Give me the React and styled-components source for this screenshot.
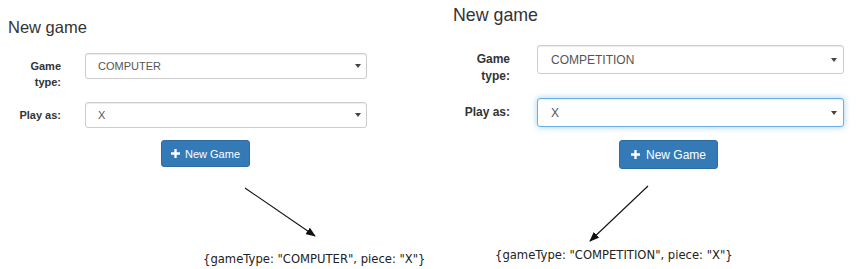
import React from "react";
import styled, { createGlobalStyle } from "styled-components";

const GlobalStyle = createGlobalStyle`
  html, body {
    margin: 0;
    padding: 0;
    background: #fff;
  }
  body {
    font-family: "Liberation Sans", Arial, sans-serif;
    color: #333;
  }
`;

const Page = styled.div`
  width: 858px;
  height: 269px;
  display: flex;
  overflow: hidden;
`;

const Panel = styled.section`
  width: ${(p) => p.$w}px;
  padding-left: ${(p) => p.$pad}px;
  box-sizing: border-box;
  display: flex;
  flex-direction: column;
  align-items: flex-start;
`;

const Title = styled.h4`
  margin: ${(p) => p.$top}px 0 0;
  font-size: ${(p) => p.$size}px;
  line-height: ${(p) => p.$lh}px;
  font-weight: 500;
  color: #333;
`;

const Form = styled.form`
  margin-top: ${(p) => p.$top}px;
  display: grid;
  grid-template-columns: ${(p) => p.$labelW}px ${(p) => p.$selectW}px;
  column-gap: ${(p) => p.$colGap}px;
  row-gap: ${(p) => p.$rowGap}px;
  align-items: start;
`;

const Label = styled.label`
  text-align: right;
  font-weight: 700;
  font-size: ${(p) => p.$size}px;
  line-height: ${(p) => p.$lh}px;
  padding-top: ${(p) => p.$padTop}px;
  color: #333;
`;

const SelectWrap = styled.div`
  position: relative;
  height: ${(p) => p.$h}px;
`;

const Select = styled.select`
  appearance: none;
  -webkit-appearance: none;
  width: 100%;
  height: 100%;
  box-sizing: border-box;
  margin: 0;
  padding: 0 0 0 ${(p) => p.$padL}px;
  font-family: "Liberation Sans", Arial, sans-serif;
  font-size: ${(p) => p.$size}px;
  color: #555;
  background: #fff;
  border: 1px solid ${(p) => (p.$focus ? "#66afe9" : "#ccc")};
  border-radius: 3px;
  outline: none;
  box-shadow: ${(p) =>
    p.$focus
      ? "inset 0 1px 1px rgba(0,0,0,.075), 0 0 6px rgba(102,175,233,.6)"
      : "inset 0 1px 1px rgba(0,0,0,.075)"};
`;

const Caret = styled.span`
  position: absolute;
  right: ${(p) => p.$right}px;
  top: 50%;
  margin-top: -2px;
  width: 0;
  height: 0;
  border-left: 3px solid transparent;
  border-right: 3px solid transparent;
  border-top: 4px solid #444;
  pointer-events: none;
`;

const Button = styled.button`
  margin: ${(p) => p.$top}px 0 0 ${(p) => p.$left}px;
  height: ${(p) => p.$h}px;
  width: ${(p) => p.$w}px;
  box-sizing: border-box;
  display: inline-flex;
  align-items: center;
  justify-content: center;
  gap: ${(p) => p.$gap}px;
  padding: 0;
  font-family: "Liberation Sans", Arial, sans-serif;
  font-size: ${(p) => p.$size}px;
  color: #fff;
  background: #337ab7;
  border: 1px solid #2e6da4;
  border-radius: 3px;
`;

const ArrowArea = styled.svg`
  display: block;
  flex: none;
`;

const Output = styled.div`
  margin-left: ${(p) => p.$left}px;
  font-family: "DejaVu Sans", Verdana, sans-serif;
  font-size: 11.6px;
  line-height: 14px;
  color: #222;
  white-space: nowrap;
`;

const PlusIcon = ({ size }) => (
  <svg width={size} height={size} viewBox="0 0 10 10">
    <path d="M3.7 0h2.6v3.7H10v2.6H6.3V10H3.7V6.3H0V3.7h3.7z" fill="#fff" />
  </svg>
);

const panels = [
  {
    key: "computer",
    w: 430,
    pad: 8,
    title: { top: 17, size: 16.5, lh: 20 },
    form: { top: 16, labelW: 53, selectW: 282, colGap: 24, rowGap: 12 },
    label: { size: 11, lh: 16, padTop: 5 },
    select: { h: 26, size: 11, padL: 12, caret: 6 },
    gameType: "COMPUTER",
    focus: false,
    button: { top: 12, left: 153, w: 89, h: 27, size: 11, gap: 5, icon: 9 },
    arrow: { w: 422, h: 85, x1: 237, y1: 21, x2: 307, y2: 69 },
    outLeft: 195,
  },
  {
    key: "competition",
    w: 428,
    pad: 23,
    title: { top: 4, size: 17.8, lh: 22 },
    form: { top: 19, labelW: 57, selectW: 307, colGap: 27, rowGap: 13 },
    label: { size: 12, lh: 17, padTop: 6 },
    select: { h: 29, size: 12, padL: 13, caret: 7 },
    gameType: "COMPETITION",
    focus: true,
    button: { top: 13, left: 166, w: 99, h: 29, size: 12, gap: 6, icon: 9 },
    arrow: { w: 405, h: 79, x1: 195, y1: 17, x2: 137, y2: 72 },
    outLeft: 42,
  },
];

const GamePanel = ({ cfg }) => {
  const { arrow } = cfg;
  const markerId = `head-${cfg.key}`;
  return (
    <Panel $w={cfg.w} $pad={cfg.pad}>
      <Title $top={cfg.title.top} $size={cfg.title.size} $lh={cfg.title.lh}>
        New game
      </Title>
      <Form
        $top={cfg.form.top}
        $labelW={cfg.form.labelW}
        $selectW={cfg.form.selectW}
        $colGap={cfg.form.colGap}
        $rowGap={cfg.form.rowGap}
      >
        <Label $size={cfg.label.size} $lh={cfg.label.lh} $padTop={cfg.label.padTop}>
          Game
          <br />
          type:
        </Label>
        <SelectWrap $h={cfg.select.h}>
          <Select $size={cfg.select.size} $padL={cfg.select.padL} defaultValue={cfg.gameType}>
            <option value={cfg.gameType}>{cfg.gameType}</option>
          </Select>
          <Caret $right={cfg.select.caret} />
        </SelectWrap>
        <Label $size={cfg.label.size} $lh={cfg.label.lh} $padTop={cfg.label.padTop}>
          Play as:
        </Label>
        <SelectWrap $h={cfg.select.h}>
          <Select
            $size={cfg.select.size}
            $padL={cfg.select.padL}
            $focus={cfg.focus}
            defaultValue="X"
          >
            <option value="X">X</option>
          </Select>
          <Caret $right={cfg.select.caret} />
        </SelectWrap>
      </Form>
      <Button
        type="button"
        $top={cfg.button.top}
        $left={cfg.button.left}
        $w={cfg.button.w}
        $h={cfg.button.h}
        $size={cfg.button.size}
        $gap={cfg.button.gap}
      >
        <PlusIcon size={cfg.button.icon} />
        New Game
      </Button>
      <ArrowArea width={arrow.w} height={arrow.h}>
        <defs>
          <marker
            id={markerId}
            markerWidth="10"
            markerHeight="8"
            refX="9"
            refY="4"
            orient="auto"
            markerUnits="userSpaceOnUse"
          >
            <path d="M0 0L10 4L0 8z" fill="#111" />
          </marker>
        </defs>
        <line
          x1={arrow.x1}
          y1={arrow.y1}
          x2={arrow.x2}
          y2={arrow.y2}
          stroke="#111"
          strokeWidth="1.1"
          markerEnd={`url(#${markerId})`}
        />
      </ArrowArea>
      <Output $left={cfg.outLeft}>
        {`{gameType: "${cfg.gameType}", piece: "X"}`}
      </Output>
    </Panel>
  );
};

export default function App() {
  return (
    <>
      <GlobalStyle />
      <Page>
        {panels.map((p) => (
          <GamePanel key={p.key} cfg={p} />
        ))}
      </Page>
    </>
  );
}
